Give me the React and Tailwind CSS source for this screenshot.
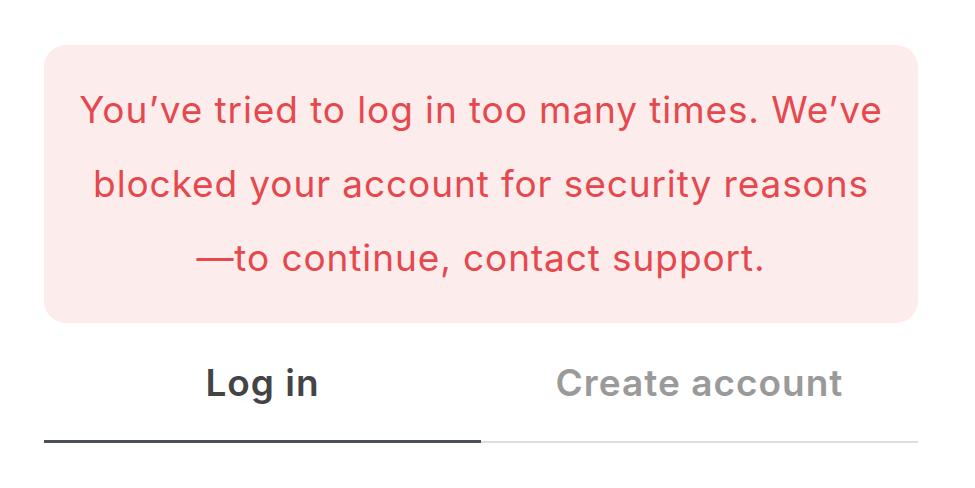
import React from "react";

const App = () => {
  return (
    <div
      className="w-[975px] h-[488px] bg-white px-[44px] pt-[45px]"
      style={{ fontFamily: "Inter, 'Noto Sans', sans-serif" }}
    >
      <div className="w-[874px] h-[278px] rounded-[22px] bg-[#fdecec] flex items-center justify-center px-6">
        <p className="text-center text-[#e5484d] text-[37px] leading-[74px] tracking-[0.9px] whitespace-nowrap">
          You’ve tried to log in too many times. We’ve
          <br />
          blocked your account for security reasons
          <br />
          —to continue, contact support.
        </p>
      </div>
      <div className="w-[874px] flex">
        <div className="flex-1 h-[120px] flex items-center justify-center border-b-[3px] border-[#4b5157]">
          <span className="text-[37px] font-semibold tracking-[1px] text-[#444446] pt-[2px]">Log in</span>
        </div>
        <div className="flex-1 h-[120px] flex items-center justify-center border-b-[2px] border-[#dedede]">
          <span className="text-[37px] font-semibold tracking-[1px] text-[#9a9a9a] pt-[2px]">Create account</span>
        </div>
      </div>
    </div>
  );
};

export default App;
